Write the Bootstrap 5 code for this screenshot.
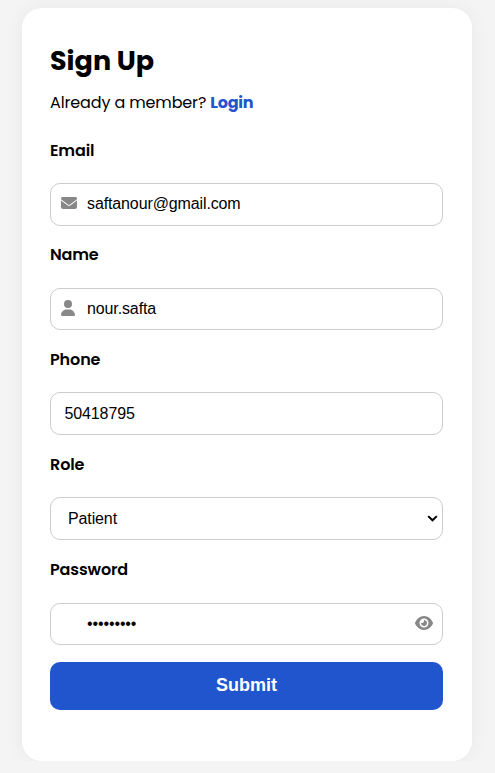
<!DOCTYPE html>
<html lang="en">
<head>
<meta charset="utf-8">
<meta name="viewport" content="width=device-width, initial-scale=1">
<title>Sign Up</title>
<link rel="stylesheet" href="https://cdn.jsdelivr.net/npm/bootstrap@5.3.0/dist/css/bootstrap.min.css">
<style>
body { background: #f4f4f4; color: #000; font-family: Poppins, Inter, sans-serif; font-size: 16px; }
.signup-panel { width: 450px; height: 753px; margin: 8px auto 0 22px; padding: 35px 29px 0 28px; border-radius: 20px; box-shadow: 0 0 20px rgba(0,0,0,.05); }
.signup-title { font-size: 27px; line-height: 36px; }
.signup-note { line-height: 24px; margin-top: 12px; letter-spacing: -.14px; }
.signup-note a { color: #2155cd; letter-spacing: -.25px; }
.field-label { display: block; line-height: 24px; font-weight: 600; letter-spacing: -.12px; padding-top: 18px; margin-bottom: 20px; }
.first-label { padding-top: 24px; letter-spacing: -.15px; }
.name-label { padding-top: 17px; margin-bottom: 21px; letter-spacing: -.2px; }
.password-label { margin-bottom: 21px; }
.field-box { height: 43px; }
.field-short { height: 42px; }
.field-box .form-control, .field-box .form-select { height: 100%; border: 1px solid #ccc; border-radius: 10px; color: #000; background: #fff; font: 16px "Liberation Sans", Arial, sans-serif; letter-spacing: -.12px; padding: 0 14px 2px 13.500px; }
.field-box .with-icon { padding-left: 36px; }
.field-box .form-select { padding-left: 17px; padding-bottom: 1px; }
.field-icon { position: absolute; fill: #888; pointer-events: none; }
.submit-btn { height: 48px; margin-top: 17px; border: 0; border-radius: 10px; background: #2155cd; font: bold 18px "Liberation Sans", Arial, sans-serif; padding: 0 0 2px; }
.ico-mail { left: 11px; top: 12px; }
.ico-user { left: 11px; top: 12px; }
.ico-caret { right: 5px; top: 18px; }
.ico-eye { right: 10.500px; top: 12px; }
</style>
</head>
<body class="overflow-hidden">
<main class="signup-panel bg-white">
  <h1 class="signup-title fw-bold mb-0">Sign Up</h1>
  <p class="signup-note mb-0">Already a member? <a href="#" class="fw-bold text-decoration-none">Login</a></p>
  <form>
    <label class="field-label first-label" for="email">Email</label>
    <div class="field-box position-relative">
      <svg class="field-icon ico-mail" width="16" height="16" viewBox="0 0 512 512"><path d="M48 64C21.500 64 0 85.500 0 112c0 15.100 7.100 29.300 19.200 38.400L236.800 313.600c11.400 8.500 27 8.500 38.400 0L492.800 150.400c12.100-9.100 19.200-23.300 19.200-38.400 0-26.500-21.500-48-48-48H48zM0 176v208c0 35.300 28.700 64 64 64h384c35.300 0 64-28.700 64-64V176L294.400 339.200c-22.800 17.100-54 17.100-76.800 0L0 176z"/></svg>
      <input class="form-control with-icon" id="email" type="email" value="saftanour@gmail.com">
    </div>
    <label class="field-label name-label" for="name">Name</label>
    <div class="field-box field-short position-relative">
      <svg class="field-icon ico-user" width="14" height="16" viewBox="0 0 448 512"><path d="M224 256a128 128 0 1 0 0-256 128 128 0 1 0 0 256zm-45.700 48C79.800 304 0 383.800 0 482.300 0 498.700 13.300 512 29.700 512h388.600c16.400 0 29.700-13.300 29.700-29.700C448 383.800 368.200 304 269.700 304h-91.400z"/></svg>
      <input class="form-control with-icon pb-0" id="name" type="text" value="nour.safta">
    </div>
    <label class="field-label" for="phone">Phone</label>
    <div class="field-box">
      <input class="form-control pb-0" id="phone" type="tel" value="50418795">
    </div>
    <label class="field-label" for="role">Role</label>
    <div class="field-box position-relative">
      <select class="form-select" id="role"><option selected>Patient</option></select>
      <svg class="field-icon ico-caret" width="11" height="7" viewBox="0 0 11 7"><path d="M1.200 1.100 5.500 5.300 9.800 1.100" fill="none" stroke="#000" stroke-width="2"/></svg>
    </div>
    <label class="field-label password-label" for="password">Password</label>
    <div class="field-box field-short position-relative">
      <input class="form-control with-icon pb-0" id="password" type="password" value="noursafta">
      <svg class="field-icon ico-eye" width="18" height="16" viewBox="0 0 576 512"><path d="M288 32c-80.800 0-145.500 36.800-192.600 80.600C48.600 156 17.300 208 2.500 243.700c-3.300 7.900-3.300 16.700 0 24.600C17.300 304 48.600 356 95.400 399.400 142.500 443.200 207.200 480 288 480s145.500-36.800 192.600-80.600c46.800-43.500 78.100-95.400 93-131.100 3.300-7.900 3.300-16.700 0-24.600-14.900-35.700-46.200-87.700-93-131.100C433.500 68.800 368.800 32 288 32zM144 256a144 144 0 1 1 288 0 144 144 0 1 1-288 0zm144-64c0 35.300-28.700 64-64 64-7.100 0-13.900-1.200-20.300-3.300-5.500-1.800-11.900 1.600-11.700 7.400.3 6.900 1.300 13.800 3.200 20.700 13.700 51.200 66.400 81.600 117.600 67.900s81.600-66.400 67.900-117.600c-11.100-41.500-47.800-69.400-88.600-71.100-5.800-.2-9.200 6.100-7.400 11.700 2.100 6.400 3.300 13.200 3.300 20.300z"/></svg>
    </div>
    <button class="btn btn-primary submit-btn w-100" type="button">Submit</button>
  </form>
</main>
<script src="https://cdn.jsdelivr.net/npm/bootstrap@5.3.0/dist/js/bootstrap.bundle.min.js"></script>
</body>
</html>
